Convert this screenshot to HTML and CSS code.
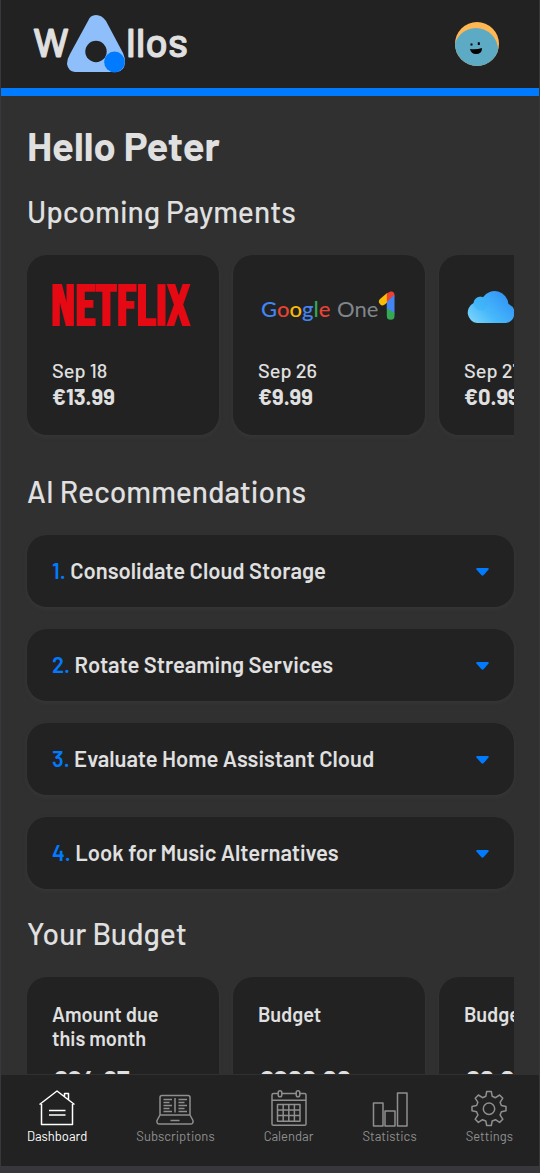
FILE: index.html
```html
<!DOCTYPE html>
<html lang="en">
<head>
<meta charset="utf-8">
<meta name="viewport" content="width=device-width, initial-scale=1">
<title>Wallos</title>
<link rel="stylesheet" href="styles.css">
</head>
<body>
<header class="header">
  <a class="brand" href="#" aria-label="Wallos">
    <svg width="156" height="58" viewBox="0 0 156 58">
      <g class="brand-text"><text x="0" y="42">W</text><text x="93" y="42">llos</text></g>
      <path fill="#8fbffa" d="M55 6Q57 0 63 0Q69 0 73 6L90 38Q92 42 92 48Q91 56 84 57H42Q35 56 34 49Q34 44 37 39Z"/>
      <circle cx="63" cy="36.5" r="10.7" fill="#222"/>
      <circle cx="81.5" cy="47" r="10.4" fill="#007bff"/>
    </svg>
  </a>
  <button class="avatar" type="button" aria-label="Account menu">
    <svg width="44" height="44" viewBox="0 0 44 44">
      <defs><clipPath id="round"><circle cx="22" cy="22" r="22"/></clipPath></defs>
      <g clip-path="url(#round)">
        <rect width="44" height="44" fill="#ffb753"/>
        <circle cx="21" cy="28" r="22" fill="#5daac4"/>
        <path d="M15.500 22.500h2M23.800 20.200v2.800" stroke="#000" stroke-width="2"/>
        <path d="M15 27q6 1 12-1q0 6-6 6q-5 0-6-5z" fill="#000"/>
      </g>
    </svg>
  </button>
</header>

<main class="main">
  <h1>Hello Peter</h1>

  <section>
    <h2>Upcoming Payments</h2>
    <ul class="cards">
      <li class="card">
        <div class="logo">
          <svg width="142" height="40" viewBox="0 0 142 40"><text class="netflix" x="-1" y="39">NETFLIX</text></svg>
        </div>
        <p class="date">Sep 18</p>
        <p class="price">€13.99</p>
      </li>
      <li class="card">
        <div class="logo">
          <svg width="142" height="40" viewBox="0 0 142 40">
            <text class="google" x="3" y="31"><tspan fill="#4285f4">G</tspan><tspan fill="#ea4335">o</tspan><tspan fill="#fbbc04">o</tspan><tspan fill="#4285f4">g</tspan><tspan fill="#34a853">l</tspan><tspan fill="#ea4335">e</tspan></text>
            <text class="one" x="79" y="31">One</text>
            <path d="M124.700 15.500L130 11" stroke="#fbbc04" stroke-width="7.400" stroke-linecap="round"/>
            <path d="M128.800 7.500l3.500-2q4-.7 4.200 3.500l-1 5-6.700 2z" fill="#ea4335"/>
            <path d="M136.500 9v19l-7.700-5v-7z" fill="#4285f4"/>
            <path d="M128.800 22l7.700 5v3a3.850 3.850 0 0 1-7.700 0z" fill="#34a853"/>
          </svg>
        </div>
        <p class="date">Sep 26</p>
        <p class="price">€9.99</p>
      </li>
      <li class="card">
        <div class="logo">
          <svg width="142" height="40" viewBox="0 0 142 40" aria-label="iCloud">
            <defs>
              <linearGradient id="sky" x1="0" y1="1" x2="1" y2="0.3"><stop offset="0" stop-color="#84d8fb"/><stop offset=".45" stop-color="#46b8fb"/><stop offset="1" stop-color="#3193f5"/></linearGradient>
            </defs>
            <path fill="url(#sky)" d="M13 37A10.600 10.600 0 0 1 9.600 17A7 7 0 0 1 19 11.200A14 14 0 0 1 44.500 18A10 10 0 0 1 42 37Z"/>
            <circle cx="16.500" cy="17.500" r="7" fill="#39b1f6" opacity=".45"/>
          </svg>
        </div>
        <p class="date">Sep 27</p>
        <p class="price">€0.99</p>
      </li>
    </ul>
  </section>

  <section>
    <h2>AI Recommendations</h2>
    <ol class="tips">
      <li><button class="tip" type="button" aria-expanded="false"><span><b class="num">1.</b> Consolidate Cloud Storage</span><svg class="caret" width="13" height="8" viewBox="0 0 13 8"><path d="M1 0h11q1.4.6.6 1.6L7.5 7.2q-1 .9-2 0L.4 1.6Q-.4.6 1 0z"/></svg></button></li>
      <li><button class="tip" type="button" aria-expanded="false"><span><b class="num">2.</b> Rotate Streaming Services</span><svg class="caret" width="13" height="8" viewBox="0 0 13 8"><path d="M1 0h11q1.4.6.6 1.6L7.5 7.2q-1 .9-2 0L.4 1.6Q-.4.6 1 0z"/></svg></button></li>
      <li><button class="tip" type="button" aria-expanded="false"><span><b class="num">3.</b> Evaluate Home Assistant Cloud</span><svg class="caret" width="13" height="8" viewBox="0 0 13 8"><path d="M1 0h11q1.4.6.6 1.6L7.5 7.2q-1 .9-2 0L.4 1.6Q-.4.6 1 0z"/></svg></button></li>
      <li><button class="tip" type="button" aria-expanded="false"><span><b class="num">4.</b> Look for Music Alternatives</span><svg class="caret" width="13" height="8" viewBox="0 0 13 8"><path d="M1 0h11q1.4.6.6 1.6L7.5 7.2q-1 .9-2 0L.4 1.6Q-.4.6 1 0z"/></svg></button></li>
    </ol>
  </section>

  <section>
    <h2>Your Budget</h2>
    <ul class="cards">
      <li class="card"><h3>Amount due this month</h3><p class="amount">€24.97</p></li>
      <li class="card"><h3>Budget</h3><p class="amount">€200.00</p></li>
      <li class="card"><h3>Budget Used</h3><p class="amount">€0.00</p></li>
    </ul>
  </section>
</main>

<nav class="nav">
  <a class="active" href="#">
    <svg width="36" height="36" viewBox="0 0 36 36"><path d="M2.500 14v20.500h31V14M.5 14.500L18 1l17.500 13.500M25.500 7V3.500h4v6.500"/><path d="M10 20.500h16.500M10 25h16.500"/></svg>
    Dashboard
  </a>
  <a href="#">
    <svg width="38" height="36" viewBox="0 0 38 36"><path d="M4 25V7.500q0-2 2-2h26q2 0 2 2V25zM4 25l-3 5.500q-.6 3.500 2.500 3.500h31q3 0 2.500-3.500L34 25M14.500 30.500h9"/><path d="M19 8v14.500M7.500 9.500h8.500M7.500 12.500h6M7.500 15.500h8.500M7.500 18.500h6M7.500 21.500h8.500M22.500 9.500h8.500M22.500 12.500h6M22.500 15.500h8.500M22.500 18.500h6M22.500 21.500h8.500"/></svg>
    Subscriptions
  </a>
  <a href="#">
    <svg width="36" height="36" viewBox="0 0 36 36"><path d="M7 3.500H2.500q-1.500 0-1.500 1.500v29q0 1.300 1.500 1.300h31q1.500 0 1.500-1.300V5q0-1.500-1.500-1.500H29M11 3.500h14M1 10.300h34"/><rect x="7.200" y=".8" width="3.600" height="6" rx="1.800"/><rect x="25.200" y=".8" width="3.600" height="6" rx="1.800"/><path d="M6.500 14.500h22.500v16.800H6.500zM6.500 20h22.500M6.500 25.500h22.500M12.200 14.500v16.800M17.800 14.500v16.800M23.400 14.500v16.800"/></svg>
    Calendar
  </a>
  <a href="#">
    <svg width="36" height="36" viewBox="0 0 36 36"><path d="M1.500 13h9.500v23H1.500zM13 21h10v15H13zM25.500 3h9.500v33h-9.500z"/></svg>
    Statistics
  </a>
  <a href="#">
    <svg width="36" height="36" viewBox="0 0 36 36"><path d="M15.700 1.500h4.600l.9 4.800 3.300 1.400 4.100-2.700 3.200 3.200-2.700 4.100 1.300 3.300 4.600 1v4.200l-4.600 1-1.300 3.300 2.700 4.100-3.200 3.200-4.100-2.700-3.300 1.300-.9 4.500h-4.600l-.9-4.500-3.300-1.300-4.100 2.700-3.200-3.200 2.700-4.100-1.300-3.300-4.600-1v-4.200l4.600-1 1.300-3.300-2.700-4.100 3.200-3.200 4.100 2.700 3.300-1.400z"/><circle cx="18" cy="18.700" r="5.700"/></svg>
    Settings
  </a>
</nav>
</body>
</html>
```

FILE: styles.css
```css
* { box-sizing: border-box; margin: 0; }

body {
  height: 100vh;
  display: flex;
  flex-direction: column;
  padding: 0 1px 7px;
  background: #38383c;
  color: #e0e0e0;
  font-family: Barlow, Roboto, sans-serif;
}

ul, ol { list-style: none; padding: 0; }
svg { display: block; overflow: visible; }
button { border: 0; padding: 0; background: none; color: inherit; font: inherit; }

.header {
  flex: none;
  display: flex;
  justify-content: space-between;
  align-items: center;
  padding: 15px 40px 15px 32px;
  background: #222;
  border-bottom: 8px solid #007bff;
}
.brand-text {
  font-size: 41px;
  font-weight: 500;
  fill: #e0e0e0;
  stroke: #e0e0e0;
  stroke-width: 1;
  stroke-linejoin: round;
}
.avatar { border-radius: 50%; }

.main {
  flex: 1;
  min-height: 0;
  overflow: hidden auto;
  scrollbar-width: none;
  padding: 25px 25px 0 26px;
  background: #303030;
}
h1 { font-size: 40px; line-height: 48px; font-weight: 700; margin-bottom: 23px; }
h2 { font-size: 30px; line-height: 38px; font-weight: 500; margin-bottom: 25px; }

.cards {
  display: flex;
  gap: 14px;
  overflow: auto hidden;
  scrollbar-width: none;
  padding-bottom: 8px;
  margin-bottom: 29px;
}
.card, .tip {
  background: #222;
  border-radius: 20px;
  box-shadow: 0 2px 5px rgba(120, 120, 120, 0.1);
}
.card { flex: none; width: 192px; padding: 25px; }
.logo { height: 52px; display: flex; align-items: center; margin-bottom: 26px; }
.date { font-size: 20px; line-height: 25px; font-weight: 500; }
.price { font-size: 22px; line-height: 27px; font-weight: 700; }
.netflix { font-family: "Bebas Neue", "Barlow Condensed", Oswald, Roboto, sans-serif; font-size: 57px; font-weight: 700; fill: #e50914; }
.google { font-family: Lato, sans-serif; font-size: 22px; font-weight: 500; }
.one { font-family: Lato, sans-serif; font-size: 22px; font-weight: 400; fill: #80868b; }

.tips { display: grid; gap: 22px; margin-bottom: 25px; }
.tip {
  width: 100%;
  display: flex;
  justify-content: space-between;
  align-items: center;
  padding: 22px 25px 24px;
  font-size: 22px;
  line-height: 26px;
  font-weight: 600;
  text-align: left;
}
.num { color: #007bff; font-weight: 600; }
.caret { fill: #007bff; margin-top: 4px; }

h3 { font-size: 20px; line-height: 24px; font-weight: 600; min-height: 48px; }
.amount { font-size: 25px; line-height: 32px; font-weight: 700; margin-top: 12px; }

.nav {
  flex: none;
  display: flex;
  justify-content: space-between;
  padding: 15px 26px 21px;
  background: #222;
  border-top: 1px solid #303030;
}
.nav a {
  display: flex;
  flex-direction: column;
  align-items: center;
  gap: 1px;
  color: #8f8f8f;
  font-size: 13px;
  line-height: 18px;
  text-decoration: none;
}
.nav .active { color: #fff; }
.nav svg { fill: none; stroke: currentColor; stroke-width: 1.5; stroke-linejoin: round; }
```
